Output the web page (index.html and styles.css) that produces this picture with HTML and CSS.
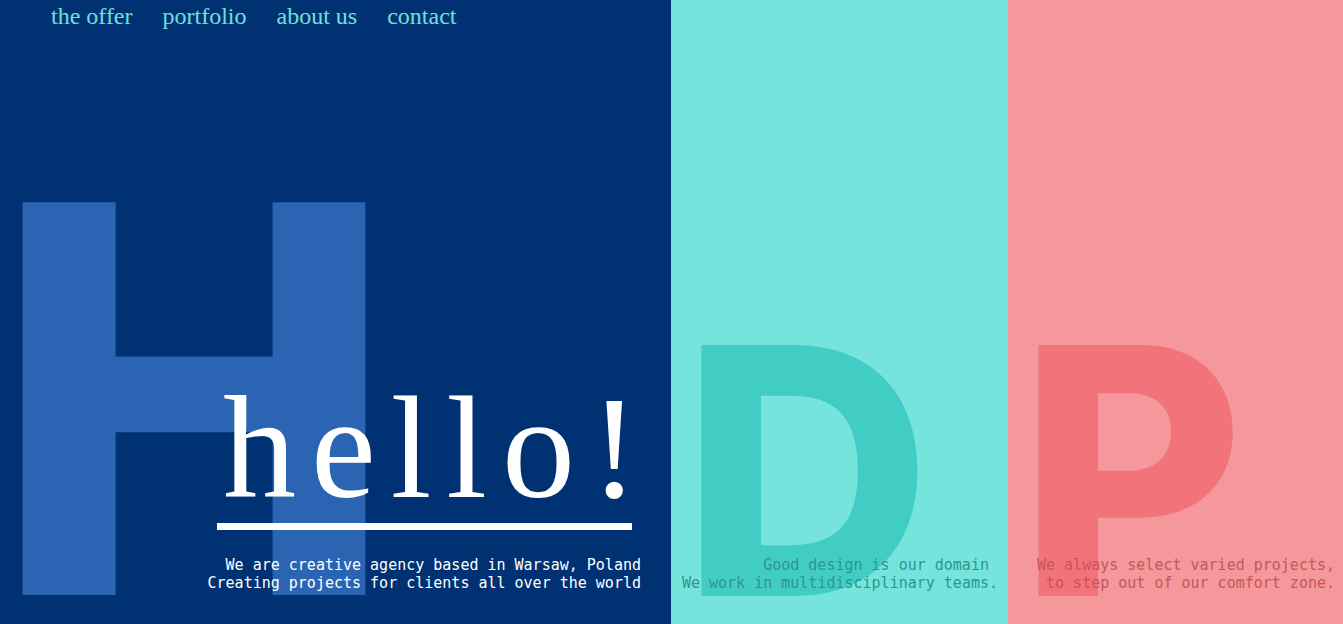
FILE: index.html
```html
<!DOCTYPE html>
<html lang="en">
<head>
<meta charset="utf-8">
<title>hello!</title>
<link rel="stylesheet" href="styles.css">
</head>
<body>
<main class="page">
  <section class="col col-blue">
    <span class="big big-h" aria-hidden="true">H</span>
    <nav class="nav">
      <a href="#">the offer</a>
      <a href="#">portfolio</a>
      <a href="#">about us</a>
      <a href="#">contact</a>
    </nav>
    <div class="intro">
      <div class="hello-block">
        <h1 class="hello">hello!</h1>
        <div class="rule"></div>
      </div>
      <p class="desc desc-blue">We are creative agency based in Warsaw, Poland<br>Creating projects for clients all over the world</p>
    </div>
  </section>
  <section class="col col-cyan">
    <span class="big big-d" aria-hidden="true">D</span>
    <p class="desc desc-cyan">Good design is our domain&nbsp;<br>We work in multidisciplinary teams.</p>
  </section>
  <section class="col col-pink">
    <span class="big big-p" aria-hidden="true">P</span>
    <p class="desc desc-pink">We always select varied projects,<br>to step out of our comfort zone.</p>
  </section>
</main>
</body>
</html>
```
FILE: styles.css
```css
* { box-sizing: border-box; }
html, body { margin: 0; padding: 0; }
body { overflow: hidden; }

.page {
  display: grid;
  grid-template-columns: 671px 337px 1fr;
  height: 624px;
  width: 1343px;
}

.col {
  position: relative;
  overflow: hidden;
  display: flex;
  flex-direction: column;
  justify-content: flex-end;
  padding-bottom: 32px;
}

.col-blue { background: #003273; justify-content: space-between; padding-right: 30px; }
.col-cyan { background: #74e4dd; padding-right: 10px; }
.col-pink { background: #f4989b; padding-right: 8px; }

.big {
  position: absolute;
  font-family: Inter, Roboto, "Liberation Sans", sans-serif;
  font-weight: 800;
  line-height: 1;
  z-index: 0;
  user-select: none;
}
.big-h { font-size: 540px; color: #2b64b2; top: 129px; left: -8px; }
.big-d { font-size: 345px; color: #41cdc4; top: 298px; left: 11px; }
.big-p { font-size: 345px; color: #f2737a; top: 298px; left: 11px; }

.nav {
  position: relative;
  z-index: 1;
  display: flex;
  gap: 30px;
  padding: 3px 0 0 51px;
}
.nav a {
  font-family: "Liberation Serif", "Times New Roman", serif;
  font-size: 24px;
  line-height: 27px;
  color: #6fe0da;
  text-decoration: none;
}

.intro {
  position: relative;
  z-index: 1;
  display: flex;
  flex-direction: column;
  align-items: flex-end;
}

.hello-block {
  width: 415px;
  margin-right: 9px;
}
.hello {
  margin: 0;
  font-family: "Liberation Serif", "Times New Roman", serif;
  font-weight: 400;
  font-size: 146px;
  line-height: 146px;
  letter-spacing: 15px;
  color: #ffffff;
  padding-left: 6px;
  white-space: nowrap;
}
.rule {
  height: 7px;
  margin-top: 2px;
  background: #ffffff;
}

.desc {
  position: relative;
  z-index: 1;
  margin: 26px 0 0;
  font-family: "DejaVu Sans Mono", "Liberation Mono", monospace;
  font-size: 15px;
  line-height: 18px;
  text-align: right;
}
.desc-blue { color: #ffffff; }
.desc-cyan { color: #2f958f; }
.desc-pink { color: #c9545c; }
```
